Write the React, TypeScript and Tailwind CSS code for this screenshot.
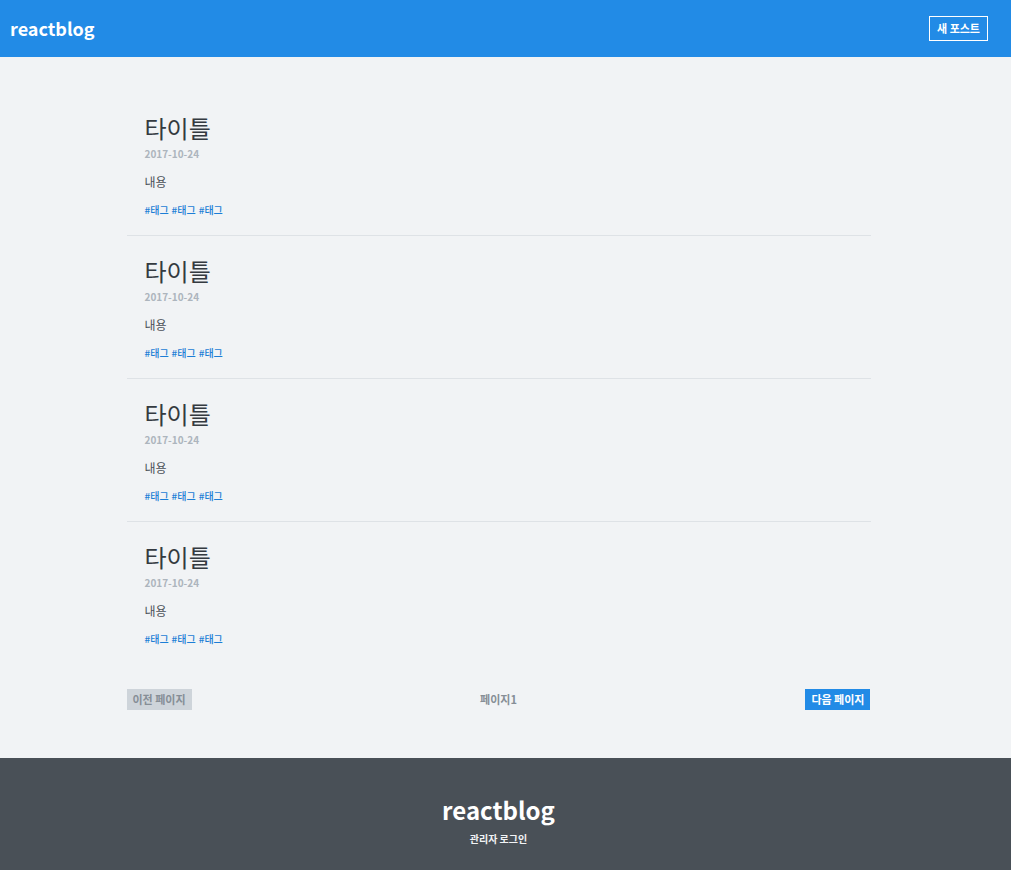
import React from "react";

const font = { fontFamily: '"Noto Sans CJK KR", "Noto Sans", sans-serif' };

const posts = [1, 2, 3, 4];

const PostItem: React.FC<{ last: boolean }> = ({ last }) => (
  <div
    className={`px-[18px] pt-[17px] pb-[17px] ${
      last ? "" : "border-b border-[#dee2e6]"
    }`}
  >
    <h2 className="text-[24px] leading-[36px] text-[#343a40] font-normal">
      타이틀
    </h2>
    <div className="text-[10px] leading-[15px] font-semibold text-[#adb5bd]">
      2017-10-24
    </div>
    <p className="mt-[11px] text-[12px] leading-[20px] text-[#495057]">내용</p>
    <div className="mt-[10px] flex gap-[3px] text-[10px] leading-[16px] font-medium text-[#1c7ed6]">
      <span>#태그</span>
      <span>#태그</span>
      <span>#태그</span>
    </div>
  </div>
);

export default function App() {
  return (
    <div className="min-h-screen flex flex-col bg-[#f1f3f5]" style={font}>
      {/* HEADER */}
      <header className="h-[57px] bg-[#228be6] flex items-center justify-between pl-[10px] pr-[23px]">
        <div className="text-[18px] font-bold text-white">reactblog</div>
        <button className="h-[25px] px-[7px] border border-white text-white text-[11px] font-bold leading-none">
          새 포스트
        </button>
      </header>

      {/* POSTS */}
      <main className="w-[758px] pr-[14px] mx-auto pt-[36px] pb-[48px]">
        {posts.map((p, i) => (
          <PostItem key={p} last={i === posts.length - 1} />
        ))}

        <div className="mt-[25px] flex items-center justify-between">
          <button className="h-[21px] px-[6px] bg-[#ced4da] text-[#868e96] text-[11px] font-bold leading-none">
            이전 페이지
          </button>
          <div className="text-[11px] font-bold text-[#868e96]">페이지1</div>
          <button className="h-[21px] px-[6px] bg-[#228be6] text-white text-[11px] font-bold leading-none">
            다음 페이지
          </button>
        </div>
      </main>

      {/* FOOTER */}
      <footer className="h-[112px] mt-auto bg-[#495057] flex flex-col items-center pt-[34px] pr-[14px]">
        <div className="text-[24px] leading-[36px] font-bold text-white">reactblog</div>
        <div className="mt-[3px] text-[10px] font-bold text-[#f1f3f5]">관리자 로그인</div>
      </footer>
    </div>
  );
}
